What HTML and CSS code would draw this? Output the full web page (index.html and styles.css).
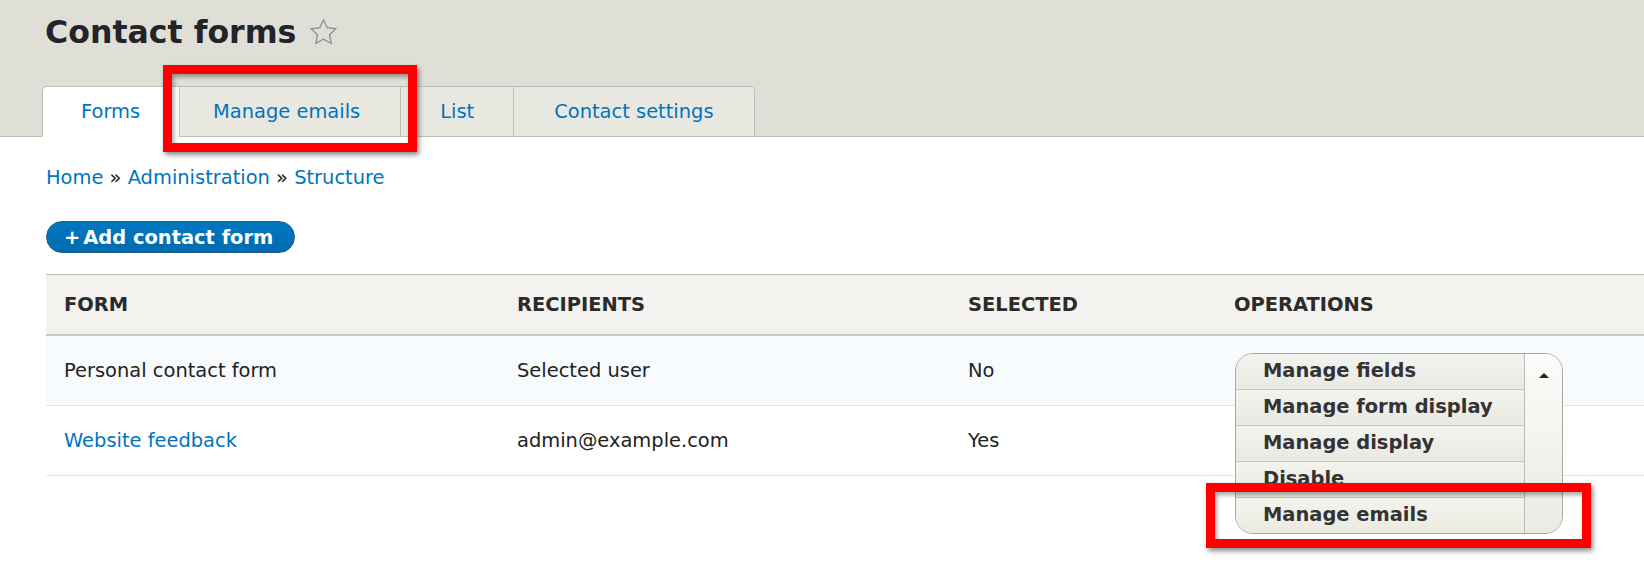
FILE: index.html
```html
<!DOCTYPE html>
<html lang="en">
<head>
<meta charset="utf-8">
<title>Contact forms</title>
<link rel="stylesheet" href="styles.css">
</head>
<body>
<header class="content-header">
  <h1 class="page-title">Contact forms
    <svg class="star" viewBox="0 0 24 24" width="29" height="29" aria-hidden="true"><path d="M12 1.6l3.1 6.45 7.1.9-5.2 4.9 1.35 7.05L12 17.5l-6.35 3.4 1.35-7.05-5.2-4.9 7.1-.9z"/></svg>
  </h1>
  <ul class="tabs">
    <li class="tab active"><a href="#">Forms</a></li>
    <li class="tab"><a href="#">Manage emails</a></li>
    <li class="tab"><a href="#">List</a></li>
    <li class="tab last"><a href="#">Contact settings</a></li>
  </ul>
</header>
<main class="page">
  <nav class="breadcrumb"><a href="#">Home</a> » <a href="#">Administration</a> » <a href="#">Structure</a></nav>
  <a class="button-primary" href="#"><span class="plus">+</span>Add contact form</a>
  <table class="forms-table">
    <colgroup>
      <col class="c-form"><col class="c-rec"><col class="c-sel"><col class="c-ops">
    </colgroup>
    <thead>
      <tr><th>Form</th><th>Recipients</th><th>Selected</th><th>Operations</th></tr>
    </thead>
    <tbody>
      <tr class="hl">
        <td>Personal contact form</td>
        <td>Selected user</td>
        <td>No</td>
        <td class="ops">
          <div class="dropbutton-wrap">
            <div class="dropbutton">
              <ul class="drop-items">
                <li>Manage fields</li>
                <li>Manage form display</li>
                <li>Manage display</li>
                <li>Disable</li>
                <li>Manage emails</li>
              </ul>
              <div class="drop-toggle"><span class="tri"></span></div>
            </div>
          </div>
        </td>
      </tr>
      <tr>
        <td><a href="#">Website feedback</a></td>
        <td>admin@example.com</td>
        <td>Yes</td>
        <td class="ops"></td>
      </tr>
    </tbody>
  </table>
</main>
<div class="annot annot-tab"></div>
<div class="annot annot-menu"></div>
</body>
</html>
```
FILE: styles.css
```css
* { box-sizing: border-box; }
html, body { margin: 0; padding: 0; }
body {
  font-family: "DejaVu Sans", Verdana, sans-serif;
  font-size: 19.45px;
  line-height: 22px;
  color: #222;
  background: #fff;
  overflow: hidden;
  position: relative;
  width: 1644px;
  height: 566px;
}
a { color: #0074bd; text-decoration: none; }

.content-header {
  background: #dfded7;
  border-bottom: 1px solid #bfbfba;
  padding: 14px 0 0 42px;
}
.page-title {
  margin: 0 0 35px 3px;
  font-size: 31.6px;
  line-height: 37px;
  font-weight: bold;
  color: #232429;
  display: flex;
  align-items: center;
  gap: 13px;
}
.star {
  fill: none;
  stroke: #8b8d90;
  stroke-width: 1.05;
  margin-top: -1px;
}
.tabs {
  list-style: none;
  margin: 0 0 -1px 0;
  padding: 0;
  display: flex;
}
.tab a {
  display: block;
  padding: 0 40px;
  height: 51px;
  line-height: 49px;
  background: #e8e8e1;
  border-top: 1px solid #bfbfba;
  border-left: 1px solid #bfbfba;
  border-bottom: 1px solid #bfbfba;
}
.tab.active a {
  background: #fff;
  border-bottom-color: #fff;
  border-top-left-radius: 5px;
  padding: 0 39px 0 38px;
}
.tab.last a {
  border-right: 1px solid #bfbfba;
  border-top-right-radius: 5px;
  padding: 0 40px 0 40px;
}
.tab:nth-child(2) a { padding: 0 40px 0 33px; }
.tab:nth-child(3) a { padding: 0 39px; }

.page { padding: 30px 0 0 46px; }
.breadcrumb { line-height: 22px; }
.button-primary {
  display: inline-flex;
  align-items: center;
  margin-top: 32px;
  height: 32px;
  padding: 2px 21px 0 17px;
  border-radius: 16px;
  background: linear-gradient(#0077c0, #006cb0);
  border: 1px solid #1e5c90;
  color: #fff;
  font-weight: bold;
}
.plus { margin-right: 3px; }

.forms-table {
  margin-top: 21px;
  width: 100%;
  border-collapse: collapse;
  table-layout: fixed;
}
.c-form { width: 453px; }
.c-rec { width: 451px; }
.c-sel { width: 266px; }
.c-ops { width: auto; }
.forms-table th {
  text-align: left;
  text-transform: uppercase;
  font-weight: bold;
  color: #2b2b2b;
  background: #f3f2ee;
  border-top: 1px solid #bfbfba;
  border-bottom: 2px solid #c9c9c4;
  padding: 19px 18px 18px;
}
.forms-table td {
  padding: 24px 18px 23px;
  border-bottom: 1px solid #e6e4df;
  vertical-align: middle;
  color: #222;
}
.forms-table tr.hl td { background: #f7fbfe; }
.forms-table td.ops { padding: 17px 18px 16px; }

.dropbutton-wrap { position: relative; height: 36px; }
.dropbutton {
  position: absolute;
  top: 0;
  left: 1px;
  width: 328px;
  display: flex;
  border: 1px solid #a8a8a4;
  border-radius: 18px;
  overflow: hidden;
  background: #f3f3ef;
  z-index: 2;
}
.drop-items {
  list-style: none;
  margin: 0;
  padding: 0;
  flex: 1;
}
.drop-items li {
  height: 36px;
  line-height: 34px;
  padding-left: 27px;
  font-weight: bold;
  color: #333;
  background: linear-gradient(#f3f3ef, #e9e9e3);
  border-bottom: 1px solid #c4c4be;
  white-space: nowrap;
}
.drop-items li:last-child {
  border-bottom: 0;
  height: 35px;
  background: linear-gradient(#f4f4ee, #ebebe1);
}
.drop-toggle {
  width: 38px;
  border-left: 1px solid #bcbcb6;
  background: linear-gradient(#fbfbf9, #ebebe4);
  display: flex;
  justify-content: center;
  padding-top: 19px;
}
.tri {
  width: 0;
  height: 0;
  border-left: 5.5px solid transparent;
  border-right: 5.5px solid transparent;
  border-bottom: 5px solid #222;
}

.annot {
  position: absolute;
  border: 9px solid #ff0000;
  box-shadow: 2px 3px 5px rgba(0,0,0,0.45), inset 2px 3px 4px rgba(0,0,0,0.35);
  z-index: 5;
  pointer-events: none;
}
.annot-tab { left: 163px; top: 65px; width: 254px; height: 87px; }
.annot-menu { left: 1206px; top: 483px; width: 385px; height: 65px; }
```
